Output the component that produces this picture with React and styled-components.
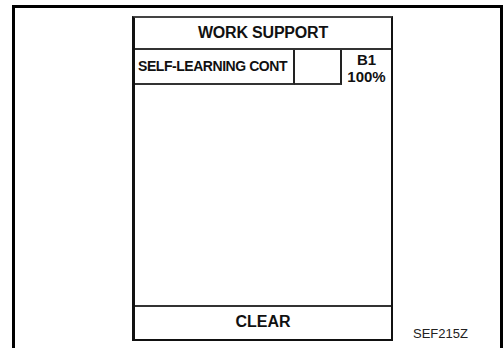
import React from "react";
import styled, { createGlobalStyle } from "styled-components";

const Global = createGlobalStyle`
  html, body { margin: 0; padding: 0; background: #fff; overflow: hidden; }
  body { font-family: "Liberation Sans", Arial, sans-serif; color: #111; }
`;

const Frame = styled.div`
  margin: 5px 0 0 12px;
  width: 491px;
  height: 343px;
  box-sizing: border-box;
  border: 3px solid #000;
  border-bottom: none;
  display: flex;
  align-items: flex-end;
  padding: 8px 0 0 117px;
`;

const Panel = styled.div`
  width: 261px;
  height: 325px;
  box-sizing: border-box;
  border: 2px solid #111;
  border-left-width: 3px;
  border-top: 2px solid #444;
  display: flex;
  flex-direction: column;
  align-self: flex-start;
`;

const Header = styled.div`
  height: 30px;
  border-bottom: 2px solid #333;
  display: flex;
  align-items: center;
  justify-content: center;
  font-weight: bold;
  font-size: 16px;
  letter-spacing: -0.2px;
`;

const Row = styled.div`
  display: grid;
  grid-template-columns: 160px 47px 1fr;
  height: 34px;
`;

const Cell = styled.div`
  box-sizing: border-box;
  border-right: ${(p) => (p.$last ? "none" : "2px solid #222")};
  border-bottom: ${(p) => (p.$last ? "none" : "2px solid #333")};
  display: flex;
  flex-direction: column;
  justify-content: ${(p) => (p.$last ? "flex-start" : "center")};
  align-items: ${(p) => (p.$last ? "center" : "flex-start")};
  padding-left: ${(p) => (p.$last ? "0" : "3px")};
  padding-top: ${(p) => (p.$last ? "1px" : "0")};
  font-weight: bold;
  font-size: ${(p) => (p.$last ? "15px" : "14px")};
  letter-spacing: ${(p) => (p.$last ? "0" : "-0.45px")};
  line-height: 17px;
`;

const Body = styled.div`
  flex: 1;
`;

const Footer = styled.div`
  height: 34px;
  border-top: 2px solid #333;
  display: flex;
  align-items: center;
  justify-content: center;
  font-weight: bold;
  font-size: 16px;
  padding-bottom: 2px;
  box-sizing: border-box;
`;

const Caption = styled.div`
  margin: 0 0 7px 20px;
  font-size: 13px;
  color: #222;
`;

export default function App() {
  return (
    <>
      <Global />
      <Frame>
        <Panel>
          <Header>WORK SUPPORT</Header>
          <Row>
            <Cell>SELF-LEARNING CONT</Cell>
            <Cell />
            <Cell $last>
              <span>B1</span>
              <span>100%</span>
            </Cell>
          </Row>
          <Body />
          <Footer>CLEAR</Footer>
        </Panel>
        <Caption>SEF215Z</Caption>
      </Frame>
    </>
  );
}
